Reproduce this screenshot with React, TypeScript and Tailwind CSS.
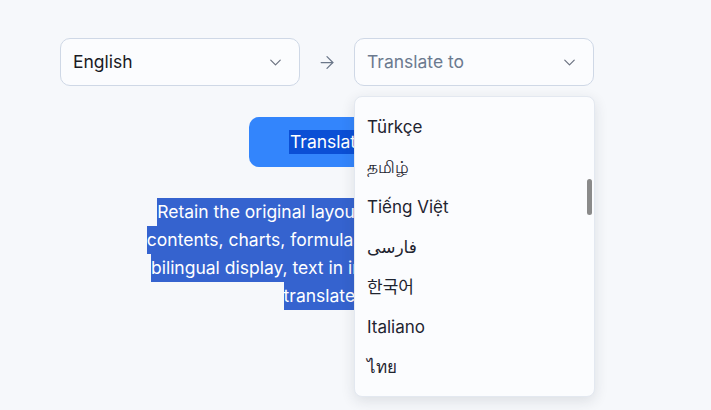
import React from "react";
import { ChevronDown, ArrowRight } from "lucide-react";

const langs = ["Türkçe", "தமிழ்", "Tiếng Việt", "فارسی", "한국어", "Italiano", "ไทย"];

const lines = [
  "Retain the original layout, including the tables of",
  "contents, charts, formulas, and more. It supports a",
  "bilingual display, text in images can also be easily",
  "translated as well",
];

export default function App() {
  return (
    <div
      className="relative w-[711px] h-[410px] overflow-hidden bg-[#f6f8fb]"
      style={{ fontFamily: 'Inter, "Noto Sans", "Noto Sans CJK KR", "DejaVu Sans", sans-serif' }}
    >
      <div className="flex items-center pt-[38px] pl-[60px]">
        <div className="w-[240px] h-[48px] rounded-[10px] border border-[#cfd8e6] bg-[#fbfcfe] flex items-center justify-between pl-[12px] pr-[14px]">
          <span className="text-[17.5px] text-[#1a1a24]">English</span>
          <ChevronDown size={19} strokeWidth={1.5} className="text-[#6b7280]" />
        </div>
        <div className="w-[20px] mx-[17px] flex justify-center">
          <ArrowRight size={23} strokeWidth={1.5} className="text-[#6b7789]" />
        </div>
        <div className="relative w-[240px]">
          <div className="w-[240px] h-[48px] rounded-[10px] border border-[#cfd8e6] bg-[#fbfcfe] flex items-center justify-between pl-[12px] pr-[14px]">
            <span className="text-[17.5px] text-[#6b7a8f]">Translate to</span>
            <ChevronDown size={19} strokeWidth={1.5} className="text-[#6b7280]" />
          </div>
          <div className="absolute z-10 left-0 top-[58px] w-[241px] h-[301px] rounded-[8px] border border-[#e3e8f0] bg-[#fbfcfe] shadow-[0_4px_14px_rgba(30,41,59,0.12)] pt-[11px]">
            {langs.map((l) => (
              <div key={l} className="h-[40px] flex items-center px-[12px] text-[17px] text-[#1f2430]">
                {l}
              </div>
            ))}
            <div className="absolute right-[2px] top-[82px] w-[5px] h-[36px] rounded-full bg-[#8a8a8a]" />
          </div>
        </div>
      </div>

      <div className="flex justify-center mt-[31px]">
        <div className="w-[213px] h-[50px] rounded-[10px] bg-[#3385fc] flex items-center pl-[40px]">
          <span className="bg-[#0b4fd5] text-white text-[17.5px] leading-[24px] px-[1px]">Translate Now</span>
        </div>
      </div>

      <div className="mt-[31px] flex flex-col items-center">
        {lines.map((t) => (
          <div key={t} className="h-[28px] flex justify-center">
            <span className="bg-[#3563cf] text-white text-[17.5px] leading-[28px] h-[28px] inline-block">{t}</span>
          </div>
        ))}
      </div>
    </div>
  );
}
